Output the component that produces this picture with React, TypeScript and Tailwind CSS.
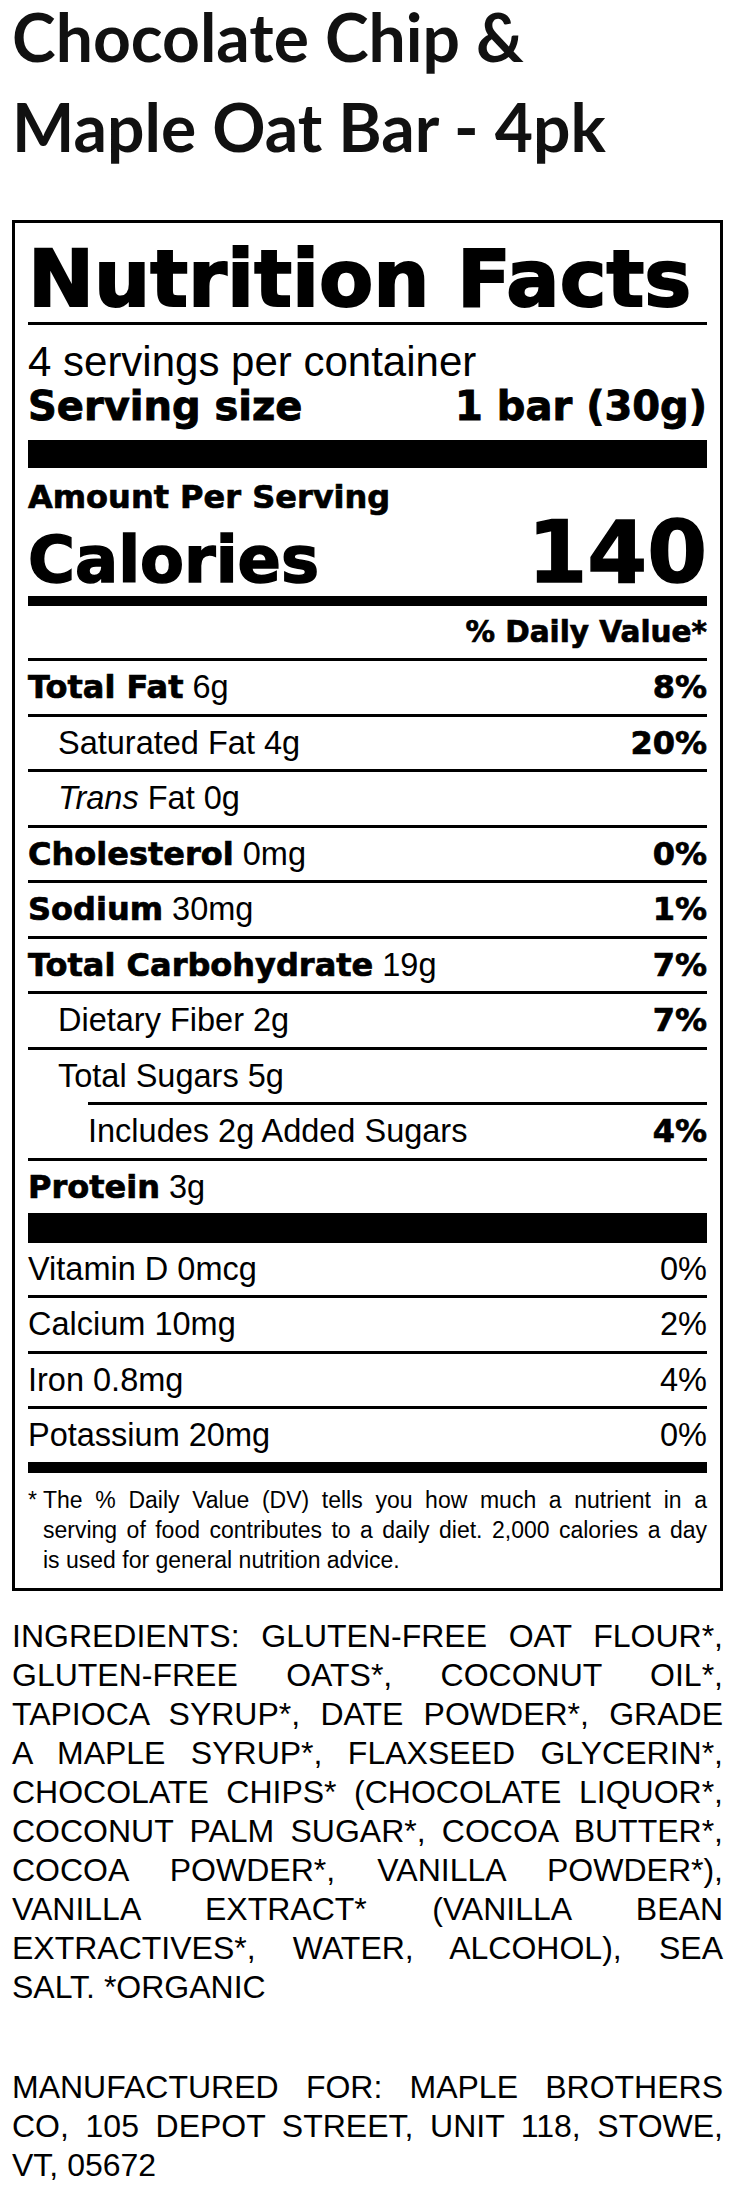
import React from "react";

const heavy = "font-['DejaVu_Sans',sans-serif] font-bold";
const reg = "font-['Liberation_Sans',Arial,sans-serif]";
const s32 = "[-webkit-text-stroke:0.7px_black]";

type Row = {
  bold?: string;
  italic?: string;
  text: string;
  pct?: string;
  indent?: 0 | 1 | 2;
  lineIndent?: boolean;
};

const rows: Row[] = [
  { bold: "Total Fat", text: " 6g", pct: "8%" },
  { text: "Saturated Fat 4g", pct: "20%", indent: 1 },
  { italic: "Trans", text: " Fat 0g", indent: 1 },
  { bold: "Cholesterol", text: " 0mg", pct: "0%" },
  { bold: "Sodium", text: " 30mg", pct: "1%" },
  { bold: "Total Carbohydrate", text: " 19g", pct: "7%" },
  { text: "Dietary Fiber 2g", pct: "7%", indent: 1 },
  { text: "Total Sugars 5g", indent: 1 },
  { text: "Includes 2g Added Sugars", pct: "4%", indent: 2, lineIndent: true },
  { bold: "Protein", text: " 3g" },
];

const vitamins = [
  ["Vitamin D 0mcg", "0%"],
  ["Calcium 10mg", "2%"],
  ["Iron 0.8mg", "4%"],
  ["Potassium 20mg", "0%"],
];

const ingredients = [
  "INGREDIENTS: GLUTEN-FREE OAT FLOUR*,",
  "GLUTEN-FREE OATS*, COCONUT OIL*,",
  "TAPIOCA SYRUP*, DATE POWDER*, GRADE",
  "A MAPLE SYRUP*, FLAXSEED GLYCERIN*,",
  "CHOCOLATE CHIPS* (CHOCOLATE LIQUOR*,",
  "COCONUT PALM SUGAR*, COCOA BUTTER*,",
  "COCOA POWDER*, VANILLA POWDER*),",
  "VANILLA EXTRACT* (VANILLA BEAN",
  "EXTRACTIVES*, WATER, ALCOHOL), SEA",
];

const manufactured = [
  "MANUFACTURED FOR: MAPLE BROTHERS",
  "CO, 105 DEPOT STREET, UNIT 118, STOWE,",
];

function NutrientRow({ r }: { r: Row }) {
  const pad = r.indent === 2 ? "pl-[60px]" : r.indent === 1 ? "pl-[30px]" : "";
  return (
    <div className={r.lineIndent ? "ml-[60px]" : ""}>
      <div
        className={`flex h-[55.5px] items-center justify-between border-t-[3px] border-black ${
          r.lineIndent ? "" : pad
        }`}
      >
        <div className={`${reg} text-[32.5px] leading-[40px]`}>
          {r.bold && <span className={`${heavy} ${s32} text-[32px]`}>{r.bold}</span>}
          {r.italic && <span className="italic">{r.italic}</span>}
          {r.text}
        </div>
        {r.pct && (
          <div className={`${heavy} ${s32} text-[32px] leading-[40px]`}>{r.pct}</div>
        )}
      </div>
    </div>
  );
}

function JustLines({ lines, last }: { lines: string[]; last: string }) {
  return (
    <div>
      {lines.map((l) => (
        <div key={l} className="text-justify [text-align-last:justify] whitespace-nowrap">
          {l}
        </div>
      ))}
      <div>{last}</div>
    </div>
  );
}

export default function App() {
  return (
    <div className="w-[735px] bg-white px-[12px] pb-[10px] text-black">
      <h1 className="-mt-[8px] font-['Lato',sans-serif] text-[66px] font-bold leading-[90px] text-[#111]">
        Chocolate Chip &amp;
        <br />
        Maple Oat Bar - 4pk
      </h1>

      <section className="mt-[48px] border-[3px] border-black px-[13px]">
        <div
          className={`${heavy} pt-[17px] text-[79px] leading-[79px] whitespace-nowrap [-webkit-text-stroke:2px_black]`}
        >
          Nutrition Facts
        </div>
        <div className="mt-[3px] h-[3px] bg-black" />
        <div className={`${reg} mt-[15px] text-[42px] leading-[44px]`}>4 servings per container</div>
        <div
          className={`${heavy} flex justify-between text-[40px] leading-[44px] [-webkit-text-stroke:0.9px_black]`}
        >
          <span>Serving size</span>
          <span>1 bar (30g)</span>
        </div>
        <div className="mt-[12px] h-[28px] bg-black" />

        <div className={`${heavy} ${s32} mt-[11px] text-[32px] leading-[36px]`}>Amount Per Serving</div>
        <div
          className={`${heavy} mt-[2px] flex h-[70px] items-baseline justify-between [-webkit-text-stroke:1.5px_black]`}
        >
          <span className="text-[64px] leading-[70px]">Calories</span>
          <span className="text-[86px] leading-[70px]">140</span>
        </div>
        <div className="mt-[9px] h-[10px] bg-black" />

        <div className={`${heavy} ${s32} mt-[9px] text-right text-[29.5px] leading-[34px]`}>
          % Daily Value*
        </div>
        <div className="mt-[9px]">
          {rows.map((r) => (
            <NutrientRow key={r.text + (r.bold ?? "")} r={r} />
          ))}
        </div>
        <div className="h-[30px] bg-black" />

        <div className={reg}>
          {vitamins.map(([t, p], i) => (
            <div
              key={t}
              className={`flex items-center justify-between text-[32.5px] leading-[40px] ${
                i === 0 ? "h-[52px]" : "h-[55.5px] border-t-[3px] border-black"
              }`}
            >
              <span>{t}</span>
              <span>{p}</span>
            </div>
          ))}
        </div>
        <div className="h-[11px] bg-black" />

        <div className={`${reg} flex pt-[12.5px] pb-[13px] text-[23px] leading-[30px]`}>
          <span className="w-[15px] shrink-0">*</span>
          <div className="flex-1">
            <div className="text-justify [text-align-last:justify] whitespace-nowrap">
              The % Daily Value (DV) tells you how much a nutrient in a
            </div>
            <div className="text-justify [text-align-last:justify] whitespace-nowrap">
              serving of food contributes to a daily diet. 2,000 calories a day
            </div>
            <div>is used for general nutrition advice.</div>
          </div>
        </div>
      </section>

      <div className={`${reg} mt-[26px] text-[32px] leading-[39px]`}>
        <JustLines lines={ingredients} last="SALT. *ORGANIC" />
        <div className="mt-[61px]">
          <JustLines lines={manufactured} last="VT, 05672" />
        </div>
      </div>
    </div>
  );
}
